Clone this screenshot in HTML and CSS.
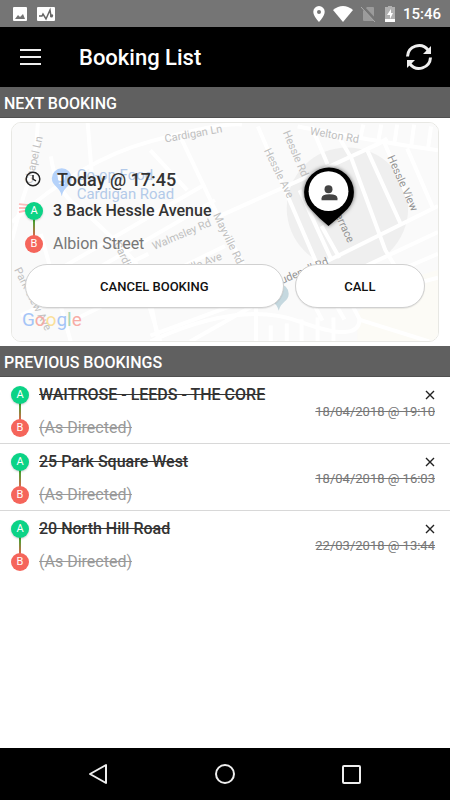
FILE: index.html
```html
<!DOCTYPE html>
<html lang="en">

<head>
    <meta charset="UTF-8">
    <meta name="viewport" content="width=device-width, initial-scale=1.0">
    <title>Booking List</title>

    <link rel="stylesheet" href="styles.css">
</head>

<body>
    <div class="status-bar">
        <svg width="14" height="14" viewBox="0 0 14 14">
            <rect width="14" height="14" rx="1" fill="#fff" />
            <path d="M2 12l3-4 2 2 3-3 2 5z" fill="#757575" />
        </svg>
        <svg width="18" height="14" viewBox="0 0 18 14">
            <rect width="18" height="14" rx="1" fill="#fff" />
            <path d="M2 9h3l1-2 3 5 4-9 1 6 2-1" fill="none" stroke="#666" stroke-width="1.5" />
            <circle cx="14.5" cy="9" r="1.5" fill="#666" />
        </svg>
        <div class="status-right">
            <svg width="12" height="16" viewBox="0 0 12 16">
                <path d="M6 0a5.7 5.7 0 0 0-5.7 5.7C.3 10 6 16 6 16s5.7-6 5.7-10.300A5.7 5.7 0 0 0 6 0zm0 8a2 2 0 1 1 0-4 2 2 0 0 1 0 4z" fill="#fff" />
            </svg>
            <svg width="20" height="16" viewBox="0 0 20 16">
                <path d="M0 4Q10-4 20 4L10 16z" fill="#fff" />
            </svg>
            <svg width="16" height="16" viewBox="0 0 16 16">
                <path d="M6 1h6q1 0 1 1v13H3q-1 0-1-1V5z" fill="#9b9b9b" />
                <path d="M1 0l14 15" stroke="#757575" stroke-width="3" />
                <path d="M0 1l14 15" stroke="#aaa" stroke-width="1" />
            </svg>
            <svg width="10" height="16" viewBox="0 0 10 16">
                <path d="M3 0h4v1h3v15H0V1h3z" fill="#b0b0b0" />
                <path d="M0 13h10v3H0z" fill="#fff" />
                <path d="M6 3L2 9h3v4l3-6H6z" fill="#fff" />
            </svg>
            <span>15:46</span>
        </div>
    </div>

    <header class="app-bar">
        <button class="icon-button" type="button" aria-label="Menu">
            <svg width="22" height="22" viewBox="0 0 22 22">
                <path d="M1 4h21M1 11h21M1 18h21" stroke="#eee" stroke-width="2" />
            </svg>
        </button>
        <h1>Booking List</h1>
        <button class="icon-button" type="button" aria-label="Refresh">
            <svg width="28" height="28" viewBox="0 0 28 28">
                <g fill="none" stroke="#eee" stroke-width="3">
                    <path d="M2.5 13.5A11.5 11.5 0 0 1 23 7" />
                    <path d="M25.5 14.5A11.5 11.5 0 0 1 5 21" />
                </g>
                <path d="M26 3v8h-8z" fill="#eee" />
                <path d="M2 25v-8h8z" fill="#eee" />
            </svg>
        </button>
    </header>

    <main>
        <h2 class="section-title">NEXT BOOKING</h2>
        <section class="next-booking">
            <svg class="map" viewBox="11 122 428 220" preserveAspectRatio="xMidYMid slice" aria-hidden="true">
                <rect x="11" y="122" width="428" height="220" fill="#fafafa" />
                <path d="M439 270L400 282 378 300 358 312V342H439z" fill="#fcfbf6" />
                <circle cx="348" cy="208" r="61" fill="#efefef" />
                <g class="roads">
                    <path d="M37 122Q36 160 22 198L11 240" />
                    <path d="M87 122L91 172" />
                    <path d="M50 156Q55 190 75 205T135 262L160 342" />
                    <path d="M11 222Q80 160 150 141T242 124" />
                    <path d="M150 150L187 190M181 138L220 220 245 268" />
                    <path d="M30 286L205 184M60 290L215 200M20 316L148 254M70 322L225 246" />
                    <path d="M215 218L300 180 380 143 388 138M258 126L322 275" />
                    <path d="M298 126Q370 140 439 150" />
                    <path d="M312 126L328 164M338 134L352 158 386 250 398 270M368 150L402 225M385 142L412 205M408 148L434 208" />
                    <path d="M364 124l-3 14M382 124l-3 17M398 124l-3 20M415 124l-3 22M432 126l-3 22" />
                    <path d="M300 275L439 206M320 288L439 232M340 296L439 254M355 300L439 278" />
                    <path d="M300 190L332 260M322 226L340 258" />
                    <path d="M150 342Q240 300 300 322T360 320L430 342" />
                    <path d="M150 336L232 306M190 342L255 305M256 306V342M271 326V342M287 324V342M302 320V342M318 318V342M334 318V342M315 306l8 15M337 306l8 14M353 306l8 15" />
                    <path d="M40 234L70 342M150 300L158 342" />
                </g>
                <g class="road-names">
                    <text transform="translate(31 184) rotate(-77)">Chapel Ln</text>
                    <text transform="translate(165 142) rotate(-10)">Cardigan Ln</text>
                    <text transform="translate(310 134) rotate(10)">Welton Rd</text>
                    <text transform="translate(264 150) rotate(64)">Hessle Ave</text>
                    <text transform="translate(283 132) rotate(67)">Hessle Rd</text>
                    <text class="dark" transform="translate(388 157) rotate(66)">Hessle View</text>
                    <text class="dark" transform="translate(333 210) rotate(65)">Terrace</text>
                    <text transform="translate(154 250) rotate(-23)">Walmsley Rd</text>
                    <text transform="translate(213 215) rotate(64)">Mayville Rd</text>
                    <text transform="translate(166 281) rotate(-21)">Mayville Ave</text>
                    <text transform="translate(113 244) rotate(64)">Cardigan</text>
                    <text class="dark" transform="translate(276 287) rotate(-23)">Cudenell Rd</text>
                    <text transform="translate(13 270) rotate(63)">Park View Ave</text>
                </g>
                <path d="M18 204l10 1M18 208h10M18 212l10-2" stroke="#fbb" stroke-width="2" />
                <path d="M61 168a10 10 0 0 0-10 10c0 8 8 8 10 18 2-10 10-10 10-18a10 10 0 0 0-10-10z" fill="#b5d2fa" />
                <path d="M57 174h7l-1 6h-5zM58 183h2M62 183h2" fill="#fff" stroke="#fff" />
                <g class="shop-name">
                    <text x="76" y="180">Co-op Food</text>
                    <text x="76" y="199">Cardigan Road</text>
                </g>
                <path d="M279 284a10 10 0 0 0-10 10c0 8 8 8 10 17 2-9 10-9 10-17a10 10 0 0 0-10-10z" fill="#c5d8df" />
                <text class="google" x="21" y="326"><tspan fill="#a5c5f7">G</tspan><tspan fill="#f7aca5">o</tspan><tspan fill="#fbe09a">o</tspan><tspan fill="#a5c5f7">g</tspan><tspan fill="#a8d8b4">l</tspan><tspan fill="#f7aca5">e</tspan></text>
                <path class="pin" d="M329 226Q320 219 311 209A25 25 0 1 1 348 209Q338 219 329 226z" />
                <circle cx="329" cy="191" r="20" fill="#fff" />
                <circle cx="329" cy="189" r="4" fill="#444" />
                <path d="M322 200v-2q0-4 8-4t8 4v2z" fill="#444" />
            </svg>
            <div class="booking-info">
                <div class="booking-time">
                    <svg width="16" height="16" viewBox="0 0 16 16" fill="none" stroke="#222" stroke-width="1.5">
                        <circle cx="8" cy="8" r="6.8" />
                        <path d="M8 4v4l3 2" />
                    </svg>
                    <strong>Today @ 17:45</strong>
                </div>
                <div class="route">
                    <div class="stops"><span class="stop stop-a">A</span><span class="stop stop-b">B</span></div>
                    <div class="places">
                        <p class="from">3 Back Hessle Avenue</p>
                        <p class="to">Albion Street</p>
                    </div>
                </div>
                <div class="actions">
                    <button class="cancel" type="button">CANCEL BOOKING</button>
                    <button class="call" type="button">CALL</button>
                </div>
            </div>
        </section>

        <h2 class="section-title">PREVIOUS BOOKINGS</h2>
        <ul class="previous">
            <li class="route">
                <div class="stops"><span class="stop stop-a">A</span><span class="stop stop-b">B</span></div>
                <div class="places">
                    <p class="from">WAITROSE - LEEDS - THE CORE</p>
                    <p class="to">(As Directed)</p>
                </div>
                <div class="date">
                    <button class="remove" type="button" aria-label="Remove">
                        <svg width="10" height="10" viewBox="0 0 10 10"><path d="M1 1l8 8M9 1l-8 8" stroke="#222" stroke-width="1.4" /></svg>
                    </button>
                    <s>18/04/2018 @ 19:10</s>
                </div>
            </li>
            <li class="route">
                <div class="stops"><span class="stop stop-a">A</span><span class="stop stop-b">B</span></div>
                <div class="places">
                    <p class="from">25 Park Square West</p>
                    <p class="to">(As Directed)</p>
                </div>
                <div class="date">
                    <button class="remove" type="button" aria-label="Remove">
                        <svg width="10" height="10" viewBox="0 0 10 10"><path d="M1 1l8 8M9 1l-8 8" stroke="#222" stroke-width="1.4" /></svg>
                    </button>
                    <s>18/04/2018 @ 16:03</s>
                </div>
            </li>
            <li class="route">
                <div class="stops"><span class="stop stop-a">A</span><span class="stop stop-b">B</span></div>
                <div class="places">
                    <p class="from">20 North Hill Road</p>
                    <p class="to">(As Directed)</p>
                </div>
                <div class="date">
                    <button class="remove" type="button" aria-label="Remove">
                        <svg width="10" height="10" viewBox="0 0 10 10"><path d="M1 1l8 8M9 1l-8 8" stroke="#222" stroke-width="1.4" /></svg>
                    </button>
                    <s>22/03/2018 @ 13:44</s>
                </div>
            </li>
        </ul>
    </main>

    <nav class="nav-bar">
        <button class="icon-button" type="button" aria-label="Back">
            <svg width="22" height="22" viewBox="0 0 22 22"><path d="M19 2v18L3 11z" fill="none" stroke="#eee" stroke-width="2" stroke-linejoin="round" /></svg>
        </button>
        <button class="icon-button" type="button" aria-label="Home">
            <svg width="22" height="22" viewBox="0 0 22 22"><circle cx="11" cy="11" r="9" fill="none" stroke="#eee" stroke-width="2" /></svg>
        </button>
        <button class="icon-button" type="button" aria-label="Recent apps">
            <svg width="22" height="22" viewBox="0 0 22 22"><rect x="2" y="3" width="17" height="17" rx="1" fill="none" stroke="#eee" stroke-width="2" /></svg>
        </button>
    </nav>
</body>

</html>
```

FILE: styles.css
```css
* {
    box-sizing: border-box;
}

body {
    font-family: Roboto, sans-serif;
    display: flex;
    flex-direction: column;
    min-height: 100vh;
    margin: 0;
    background-color: #fff;
    color: #333;
}

svg {
    display: block;
    flex: none;
}

h1,
h2,
p,
ul {
    margin: 0;
    padding: 0;
}

button {
    font-family: inherit;
    border: none;
    cursor: pointer;
}

.status-bar {
    display: flex;
    align-items: center;
    gap: 10px;
    height: 27px;
    padding: 0 9px 0 13px;
    background-color: #757575;
    color: #fff;
    font-size: 15px;
    font-weight: 500;
}

.status-right {
    display: flex;
    align-items: center;
    gap: 8px;
    margin-left: auto;
}

.app-bar {
    display: flex;
    align-items: center;
    height: 60px;
    padding: 0 17px 0 19px;
    background-color: #000;
    color: #fff;
}

.app-bar h1 {
    flex: 1;
    margin-left: 38px;
    font-size: 22px;
    font-weight: 500;
}

.icon-button {
    padding: 0;
    background: none;
}

.section-title {
    height: 31px;
    padding-left: 4px;
    border-bottom: 1px solid #505050;
    background-color: #606060;
    color: #fff;
    font-size: 16px;
    font-weight: 500;
    line-height: 33px;
}

.next-booking {
    position: relative;
    margin: 4px 11px;
    border: 1px solid #e8e8e4;
    border-radius: 10px;
    overflow: hidden;
}

.map {
    position: absolute;
    top: 0;
    left: 0;
    width: 100%;
    height: 100%;
}

.roads {
    fill: none;
    stroke: #fff;
    stroke-width: 4px;
}

.road-names {
    fill: #c0c0c0;
    font-size: 11px;
}

.road-names .dark {
    fill: #949494;
}

.shop-name {
    fill: #b3cae9;
    font-size: 15px;
}

.google {
    font-size: 19px;
}

.pin {
    fill: #000;
    filter: drop-shadow(0 0 2px rgba(0, 0, 0, 0.6));
}

/* sits above the map */
.booking-info {
    position: relative;
    padding: 44px 13px 33px;
}

.booking-time {
    display: flex;
    align-items: center;
    gap: 16px;
    height: 24px;
    margin-bottom: 11px;
    font-size: 18px;
}

.booking-time strong {
    font-weight: 500;
}

.route {
    display: flex;
    gap: 10px;
}

.stops {
    display: flex;
    flex-direction: column;
    justify-content: space-between;
    height: 51px;
    background: linear-gradient(#2fae2f, #e8604c) center / 2px 18px no-repeat;
}

.stop {
    width: 18px;
    height: 18px;
    border-radius: 50%;
    color: #fff;
    font-size: 11px;
    line-height: 18px;
    text-align: center;
}

.stop-a {
    background-color: #0bd386;
    box-shadow: 0 1px 2px rgba(0, 0, 0, 0.2);
}

.stop-b {
    background-color: #f5655b;
}

.places {
    display: flex;
    flex: 1;
    flex-direction: column;
    justify-content: space-between;
    height: 51px;
    line-height: 18px;
}

.places p {
    align-self: flex-start;
}

.from {
    font-size: 16px;
    font-weight: 500;
}

.to {
    color: #777;
    font-size: 16px;
}

.actions {
    display: flex;
    gap: 11px;
    margin-top: 11px;
}

.actions button {
    height: 44px;
    padding: 0;
    border: 1px solid #d0d0d0;
    border-radius: 22px;
    background-color: #fff;
    box-shadow: 0 1px 1px rgba(0, 0, 0, 0.08);
    color: #111;
    font-size: 13px;
    font-weight: 500;
}

.actions .cancel {
    flex: 2;
}

.actions .call {
    flex: 1;
}

.previous {
    list-style: none;
}

.previous .route {
    height: 67px;
    padding: 9px 15px 0 11px;
    border-bottom: 1px solid #d8d8d8;
}

.previous .route:last-child {
    border-bottom: none;
}

.previous .places p {
    text-decoration: line-through;
}

.previous .to {
    color: #999;
}

.date {
    display: flex;
    flex-direction: column;
    align-items: flex-end;
    color: #777;
    font-size: 13px;
}

.remove {
    padding: 4px 0;
    background: none;
}

.nav-bar {
    display: flex;
    align-items: center;
    justify-content: space-around;
    height: 52px;
    margin-top: auto;
    padding: 0 35px;
    background-color: #000;
}
```
